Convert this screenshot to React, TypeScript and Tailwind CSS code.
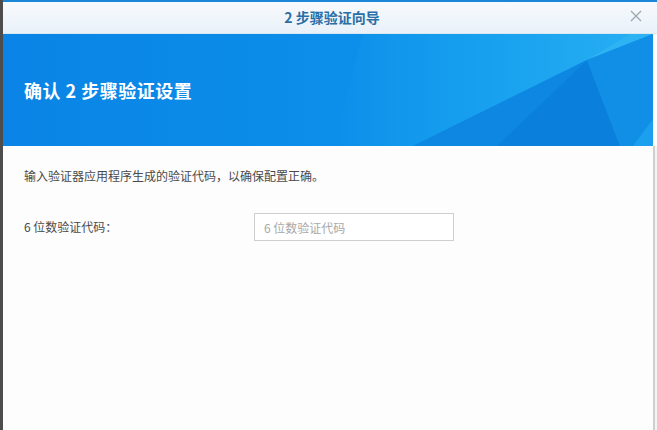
export default function App() {
  const font = { fontFamily: '"Noto Sans CJK SC", "Noto Sans", sans-serif' };
  return (
    <div className="w-[657px] h-[430px] bg-[#fdfdfd] flex overflow-hidden" style={font}>
      <div className="w-[3px] bg-[#4d4d4d]" />
      <div className="flex-1 flex flex-col">
        <div className="h-[2px] bg-[#1b86d6]" />
        <div className="h-[32px] flex items-center relative bg-gradient-to-b from-[#f7fafd] to-[#e9f1f9] border-b border-[#dbe6f0]">
          <div className="flex-1 text-center text-[14px] font-bold text-[#2a6ea6] pl-[4px]">2 步骤验证向导</div>
          <div className="absolute right-[14px] top-[7px] text-[#a0a8b0]">
            <svg width="14" height="14" viewBox="0 0 14 14" fill="none" stroke="currentColor" strokeWidth="1.4">
              <path d="M2 2 L12 12 M12 2 L2 12" />
            </svg>
          </div>
        </div>
        <div className="relative h-[112px] w-[650px] flex items-center">
          <svg className="absolute inset-0" width="650" height="112" viewBox="0 0 650 112" preserveAspectRatio="none">
            <defs>
              <linearGradient id="base" x1="0" y1="0" x2="1" y2="0">
                <stop offset="0" stopColor="#0a84e6" />
                <stop offset="0.6" stopColor="#0c90ea" />
                <stop offset="1" stopColor="#1196ea" />
              </linearGradient>
              <linearGradient id="light" x1="0" y1="0" x2="1" y2="0">
                <stop offset="0" stopColor="#1aa4f0" stopOpacity="0" />
                <stop offset="0.5" stopColor="#1aa4f0" stopOpacity="0.8" />
                <stop offset="1" stopColor="#27aef2" />
              </linearGradient>
            </defs>
            <rect width="650" height="112" fill="url(#base)" />
            <polygon points="360,0 637,0 584,26 410,112 330,112" fill="url(#light)" />
            <polygon points="584,26 627,0 650,0" fill="#2db3f4" />
            <polygon points="410,112 584,26 494,112" fill="#0d87e2" />
            <polygon points="494,112 584,26 617,112" fill="#0a7fdc" />
            <polygon points="584,26 650,0 650,112 617,112" fill="#118fe6" />
            <polygon points="630,112 650,85 650,112" fill="#1aa0ee" />
          </svg>
          <div className="relative pl-[21px] text-white font-bold text-[18px] tracking-[0.5px]">确认 2 步骤验证设置</div>
        </div>
        <div className="flex-1 flex">
          <div className="w-[650px] px-[21px] pt-[20px] text-[12px] text-[#4a4a4a]">
            <div className="leading-[20px]">输入验证器应用程序生成的验证代码，以确保配置正确。</div>
            <div className="flex items-center mt-[27px]">
              <div className="w-[230px]">6 位数验证代码：</div>
              <input
                className="w-[200px] h-[28px] border border-[#d0d0d0] bg-white px-[9px] text-[12px] placeholder:text-[#a8a8a8] outline-none"
                placeholder="6 位数验证代码"
                style={font}
              />
            </div>
          </div>
          <div className="w-[2px] bg-[#cfcfcf]" />
          <div className="flex-1 bg-[#f4f4f4]" />
        </div>
      </div>
    </div>
  );
}
